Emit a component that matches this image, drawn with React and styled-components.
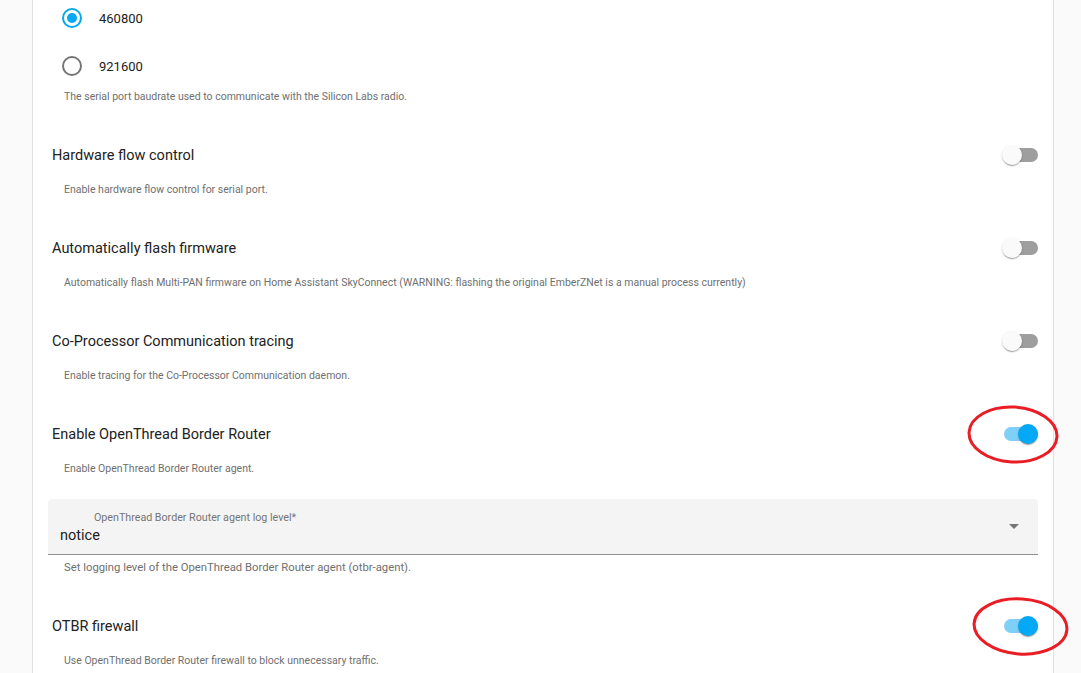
import React from "react";
import styled, { createGlobalStyle } from "styled-components";

const Global = createGlobalStyle`
  html, body { margin: 0; padding: 0; background: #fafafa; overflow: hidden; }
  body { font-family: Roboto, "Noto Sans", "Liberation Sans", sans-serif; -webkit-font-smoothing: antialiased; }
`;

const Page = styled.div`
  width: 1081px;
  height: 673px;
  overflow: hidden;
  background: #fafafa;
`;

const Card = styled.div`
  margin: -30px 0 0 32px;
  width: 1022px;
  box-sizing: border-box;
  background: #fff;
  border-left: 1px solid #e0e0e0;
  border-right: 1px solid #e0e0e0;
  padding: 0 15px 40px 15px;
  min-height: 800px;
`;

const RadioGroup = styled.div`
  display: flex;
  flex-direction: column;
  padding-top: 24px;
  padding-left: 14px;
`;

const RadioRow = styled.label`
  display: flex;
  align-items: center;
  height: 48px;
  font-size: 13px;
  color: #212121;
`;

const RadioCircle = styled.span`
  box-sizing: border-box;
  width: 20px;
  height: 20px;
  border-radius: 50%;
  border: 2px solid ${(p) => (p.$checked ? "#03a9f4" : "#757575")};
  display: flex;
  align-items: center;
  justify-content: center;
  margin-right: 17px;
  &::after {
    content: "";
    width: 10px;
    height: 10px;
    border-radius: 50%;
    background: ${(p) => (p.$checked ? "#03a9f4" : "transparent")};
  }
`;

const Description = styled.div`
  font-size: ${(p) => p.$size || 10.5}px;
  line-height: 16px;
  color: #6f6f6f;
  padding-left: 16px;
  margin-top: ${(p) => p.$mt || 0}px;
  margin-bottom: ${(p) => p.$mb || 0}px;
`;

const BoolRow = styled.div`
  display: flex;
  align-items: center;
  justify-content: space-between;
  height: 48px;
  padding-left: 4px;
`;

const Title = styled.span`
  font-size: 14.5px;
  color: #212121;
`;

const SwitchWrap = styled.div`
  position: relative;
  width: 36px;
  height: 20px;
  display: flex;
  align-items: center;
`;

const Track = styled.div`
  width: 34px;
  height: 14px;
  border-radius: 7px;
  margin-left: 2px;
  background: ${(p) => (p.$on ? "#7fd0f9" : "#9e9e9e")};
`;

const Thumb = styled.div`
  position: absolute;
  top: 0;
  left: ${(p) => (p.$on ? 16 : 0)}px;
  width: 20px;
  height: 20px;
  border-radius: 50%;
  background: ${(p) => (p.$on ? "#03a9f4" : "#fafafa")};
  box-shadow: 0 2px 1px -1px rgba(0,0,0,0.2), 0 1px 1px 0 rgba(0,0,0,0.14), 0 1px 3px 0 rgba(0,0,0,0.12);
`;

const Annotation = styled.svg`
  position: absolute;
  overflow: visible;
  pointer-events: none;
  left: 0;
  top: 0;
`;

const SelectBox = styled.div`
  position: relative;
  height: 55px;
  background: #f4f4f4;
  border-radius: 4px 4px 0 0;
  border-bottom: 1px solid #8f8f8f;
  display: flex;
  flex-direction: column;
  padding: 0 12px;
`;

const FloatLabel = styled.div`
  font-size: 10.7px;
  color: #757575;
  margin: 12px 0 0 34px;
  line-height: 13px;
`;

const SelectValue = styled.div`
  font-size: 14.5px;
  color: #212121;
  line-height: 20px;
  margin-top: 2px;
`;

const Arrow = styled.div`
  position: absolute;
  right: 19px;
  top: 25px;
  width: 0;
  height: 0;
  border-left: 5px solid transparent;
  border-right: 5px solid transparent;
  border-top: 5px solid #757575;
`;

function Switch({ on, mark }) {
  return (
    <SwitchWrap>
      <Track $on={on} />
      <Thumb $on={on} />
      {mark && (
        <Annotation width="1" height="1">
          <ellipse
            cx={mark.cx}
            cy={mark.cy}
            rx={mark.rx}
            ry={mark.ry}
            fill="none"
            stroke="#ea1c24"
            strokeWidth="3"
            transform={`rotate(${mark.rot} ${mark.cx} ${mark.cy})`}
          />
        </Annotation>
      )}
    </SwitchWrap>
  );
}

function BoolField({ title, desc, on, mark, mb = 26 }) {
  return (
    <>
      <BoolRow>
        <Title>{title}</Title>
        <Switch on={on} mark={mark} />
      </BoolRow>
      <Description $mt={3} $mb={mb}>{desc}</Description>
    </>
  );
}

export default function App() {
  return (
    <Page>
      <Global />
      <Card>
        <RadioGroup>
          <RadioRow>
            <RadioCircle $checked />
            460800
          </RadioRow>
          <RadioRow>
            <RadioCircle />
            921600
          </RadioRow>
        </RadioGroup>
        <Description $mt={-1} $mb={26}>
          The serial port baudrate used to communicate with the Silicon Labs radio.
        </Description>
        <BoolField
          title="Hardware flow control"
          desc="Enable hardware flow control for serial port."
        />
        <BoolField
          title="Automatically flash firmware"
          desc="Automatically flash Multi-PAN firmware on Home Assistant SkyConnect (WARNING: flashing the original EmberZNet is a manual process currently)"
        />
        <BoolField
          title="Co-Processor Communication tracing"
          desc="Enable tracing for the Co-Processor Communication daemon."
        />
        <BoolField
          title="Enable OpenThread Border Router"
          desc="Enable OpenThread Border Router agent."
          on
          mark={{ cx: 11, cy: 10.5, rx: 44, ry: 27.5, rot: 3 }}
          mb={22}
        />
        <SelectBox>
          <FloatLabel>OpenThread Border Router agent log level*</FloatLabel>
          <SelectValue>notice</SelectValue>
          <Arrow />
        </SelectBox>
        <Description $size={11.3} $mt={5} $mb={26}>
          Set logging level of the OpenThread Border Router agent (otbr-agent).
        </Description>
        <BoolField
          title="OTBR firewall"
          desc="Use OpenThread Border Router firewall to block unnecessary traffic."
          on
          mark={{ cx: 18.5, cy: 10.5, rx: 46.5, ry: 27.5, rot: 4 }}
        />
      </Card>
    </Page>
  );
}
